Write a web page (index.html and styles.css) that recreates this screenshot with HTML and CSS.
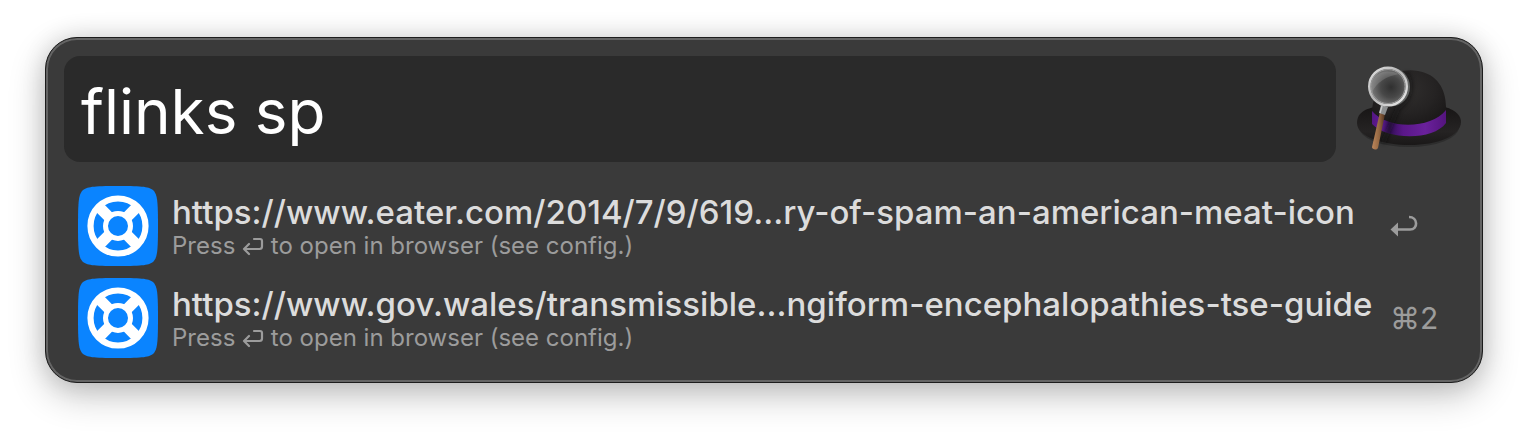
FILE: index.html
```html
<!DOCTYPE html>
<html lang="en">
<head>
<meta charset="utf-8">
<meta name="viewport" content="width=device-width, initial-scale=1">
<title>Launcher</title>
<link rel="stylesheet" href="styles.css">
</head>
<body>
<svg class="sprites" aria-hidden="true">
  <symbol id="lifebuoy" viewBox="0 0 80 80">
    <path fill="#0a84ff" d="M40 0C66 0 71 .8 75.500 4.500C79.200 9 80 14 80 40S79.200 71 75.500 75.500C71 79.200 66 80 40 80S9 79.200 4.500 75.500C.8 71 0 66 0 40S.8 9 4.500 4.500C9 .8 14 0 40 0Z"/>
    <circle cx="40" cy="40" r="27.500" fill="none" stroke="#fff" stroke-width="6.200"/>
    <circle cx="40" cy="40" r="12.500" fill="none" stroke="#fff" stroke-width="5"/>
    <path stroke="#fff" stroke-width="11" d="M30.800 30.800 22 22M49.200 30.800 58 22M30.800 49.200 22 58M49.200 49.200 58 58"/>
  </symbol>
  <symbol id="return-outline" viewBox="0 0 22 20">
    <path fill="none" stroke="currentColor" stroke-width="2.200" stroke-linecap="round" stroke-linejoin="round" d="M12 2H18Q20 2 20 4V9.500Q20 12 17.500 12H2M7 7 2 12l5 5"/>
  </symbol>
</svg>
<main class="launcher">
  <form class="search">
    <input class="query" type="text" value="flinks sp" aria-label="Search" spellcheck="false" autocomplete="off">
    <svg class="hat" viewBox="0 0 112 96" aria-hidden="true">
      <defs>
        <linearGradient id="brim" x1="0" y1="0" x2="0" y2="1"><stop offset="0" stop-color="#171515"/><stop offset=".65" stop-color="#252323"/><stop offset="1" stop-color="#1a1818"/></linearGradient>
        <radialGradient id="crown" cx=".48" cy=".32" r=".62"><stop offset="0" stop-color="#302e2d"/><stop offset=".6" stop-color="#252323"/><stop offset="1" stop-color="#1b1919"/></radialGradient>
        <linearGradient id="band"><stop offset="0" stop-color="#531783"/><stop offset=".12" stop-color="#601b94"/><stop offset=".24" stop-color="#35105a"/><stop offset=".42" stop-color="#5a1789"/><stop offset=".72" stop-color="#6a219b"/><stop offset="1" stop-color="#54147e"/></linearGradient>
        <radialGradient id="lens" cx=".58" cy=".52" r=".55"><stop offset="0" stop-color="#303030"/><stop offset=".5" stop-color="#484848"/><stop offset="1" stop-color="#7d7d7d"/></radialGradient>
        <linearGradient id="rim" x1="0" y1="0" x2="1" y2="1"><stop offset="0" stop-color="#e3e3e3"/><stop offset=".45" stop-color="#b5b5b5"/><stop offset="1" stop-color="#eee"/></linearGradient>
        <linearGradient id="wood"><stop offset="0" stop-color="#bd875b"/><stop offset=".55" stop-color="#946742"/><stop offset="1" stop-color="#51331f"/></linearGradient>
        <filter id="soft" x="-50%" y="-50%" width="200%" height="200%"><feGaussianBlur stdDeviation="2"/></filter>
      </defs>
      <ellipse cx="57" cy="66" rx="50" ry="20" fill="#2d2d2d"/>
      <path fill="url(#brim)" d="M5 62C5 50 16 47 28 45H87C98 46 109 52 109 61C109 75 85 84 58 84S5 76 5 62Z"/>
      <path fill="url(#crown)" d="M20 59C19 42 23 31 32 21C42 10 55 8 66 10C85 13 94 28 94 46V60C85 73 35 76 20 59Z"/>
      <path fill="url(#band)" d="M20 50C36 69 79 68 94 49V62C81 80 35 79 20 63Z"/>
      <path fill="none" stroke="#090909" stroke-width="5" opacity=".5" filter="url(#soft)" d="M54 12C63 26 57 39 46 47L31 82"/>
      <path fill="url(#wood)" d="M28 51 33 53 26 87C24 90 20 88 20 86Z"/>
      <path fill="#8d8f90" d="M29 44 36 46 33 54 27 52Z"/>
      <path stroke="#c9caca" stroke-width="1.500" d="M30 45 28 52"/>
      <ellipse cx="39" cy="26" rx="19" ry="19.500" fill="#616362"/>
      <circle cx="36" cy="25.500" r="18.800" fill="url(#lens)" stroke="url(#rim)" stroke-width="2.400"/>
      <path fill="#c7c7c7" opacity=".2" d="M20 32C16 14 32 6 47 13C35 15 24 21 20 32Z"/>
      <circle cx="36" cy="25.500" r="17" fill="none" stroke="#989898" stroke-width="1"/>
    </svg>
  </form>
  <ul class="results">
    <li>
      <a class="result" href="#eater">
        <svg class="icon" aria-hidden="true"><use href="#lifebuoy"/></svg>
        <span class="text">
          <span class="title">https://www.eater.com/2014/7/9/619...ry-of-spam-an-american-meat-icon</span>
          <span class="subtitle">Press <svg class="return-key" role="img" aria-label="Return"><use href="#return-outline"/></svg> to open in browser (see config.)</span>
        </span>
        <span class="shortcut">
          <svg class="return-solid" viewBox="0 0 28 22" role="img" aria-label="Return"><path fill="currentColor" d="M.5 14.500 8 7.500V21.500Z"/><path fill="none" stroke="currentColor" stroke-width="2.600" d="M7 14.500H20C28.500 14.500 28 2 19 2"/></svg>
        </span>
      </a>
    </li>
    <li>
      <a class="result" href="#gov">
        <svg class="icon" aria-hidden="true"><use href="#lifebuoy"/></svg>
        <span class="text">
          <span class="title">https://www.gov.wales/transmissible...ngiform-encephalopathies-tse-guide</span>
          <span class="subtitle">Press <svg class="return-key" role="img" aria-label="Return"><use href="#return-outline"/></svg> to open in browser (see config.)</span>
        </span>
        <span class="shortcut">⌘2</span>
      </a>
    </li>
  </ul>
</main>
</body>
</html>
```
FILE: styles.css
```css
* {
  box-sizing: border-box;
}

body {
  margin: 0;
  padding: 37px 45px 53px;
  background: #fff;
  font-family: Inter, "Liberation Sans", sans-serif;
}

.sprites {
  position: absolute;
  width: 0;
  height: 0;
}

.launcher {
  padding: 16px 16px 24px;
  border: 1px solid #1c1c1c;
  border-radius: 32px;
  background: #3a3a3a;
  box-shadow: inset 0 0 0 2px #646464, 0 12px 36px rgba(0, 0, 0, .24), 0 0 24px rgba(0, 0, 0, .12);
}

.search {
  display: flex;
  align-items: center;
  gap: 16px;
  margin: 0;
  padding: 2px;
}

.query {
  flex: 1;
  min-width: 0;
  height: 106px;
  padding: 4px 17px 0;
  border: 0;
  border-radius: 16px;
  outline: 0;
  background: #2a2a2a;
  color: #fff;
  font: 400 62px Inter, "Liberation Sans", sans-serif;
}

.hat {
  flex: none;
  width: 112px;
  height: 96px;
}

.results {
  display: grid;
  gap: 12px;
  margin: 0;
  padding: 22px 16px 0;
  list-style: none;
}

.result {
  display: flex;
  align-items: center;
  gap: 14px;
  color: #dcdcdc;
  text-decoration: none;
}

.icon {
  flex: none;
  width: 80px;
  height: 80px;
}

.text {
  display: grid;
  flex: 1;
  min-width: 0;
  padding-bottom: 2px;
}

.title {
  font-size: 33px;
  font-weight: 500;
  line-height: 42px;
  white-space: nowrap;
}

.subtitle {
  color: #9c9c9c;
  font-size: 24px;
  line-height: 26px;
}

.return-key {
  width: 22px;
  height: 20px;
  vertical-align: -3px;
}

.shortcut {
  display: flex;
  flex: none;
  width: 60px;
  color: #9c9c9c;
  font-size: 30px;
}

.return-solid {
  width: 28px;
  height: 22px;
}
```
